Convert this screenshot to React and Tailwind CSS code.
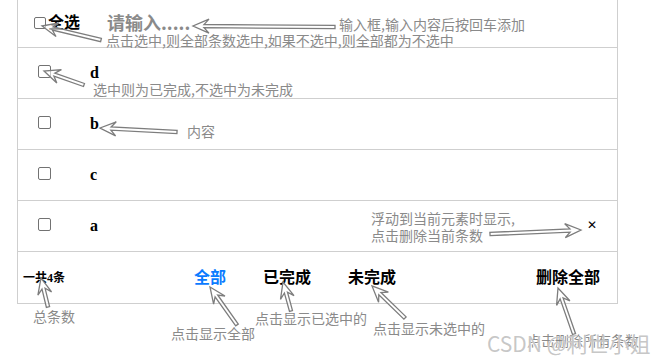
const serif = { fontFamily: '"Liberation Serif", "Noto Sans CJK SC", serif' }

function arrow(x1, y1, x2, y2) {
  // tail (x1,y1) -> tip (x2,y2), hollow arrow
  const dx = x2 - x1
  const dy = y2 - y1
  const len = Math.hypot(dx, dy)
  const ux = dx / len
  const uy = dy / len
  const nx = -uy
  const ny = ux
  const sw = 1.6
  const hl = 16
  const hw = 7
  const bx = x2 - ux * hl
  const by = y2 - uy * hl
  const nb = x2 - ux * (hl - 5)
  const nby = y2 - uy * (hl - 5)
  const pts = [
    [x1 + nx * sw, y1 + ny * sw],
    [nb + nx * sw, nby + ny * sw],
    [bx + nx * hw, by + ny * hw],
    [x2, y2],
    [bx - nx * hw, by - ny * hw],
    [nb - nx * sw, nby - ny * sw],
    [x1 - nx * sw, y1 - ny * sw],
  ]
  return pts.map((p) => p[0].toFixed(1) + ',' + p[1].toFixed(1)).join(' ')
}

const arrows = [
  [335, 27, 193, 26],
  [101, 40, 42, 26],
  [84, 85, 44, 71],
  [177, 132, 100, 128],
  [490, 234, 581, 230],
  [48, 307, 41, 278],
  [237, 325, 210, 287],
  [291, 311, 283, 282],
  [405, 318, 372, 286],
  [574, 334, 558, 288],
]

const notes = [
  { t: '输入框,输入内容后按回车添加', x: 339, y: 15 },
  { t: '点击选中,则全部条数选中,如果不选中,则全部都为不选中', x: 106, y: 31 },
  { t: '选中则为已完成,不选中为未完成', x: 93, y: 80 },
  { t: '内容', x: 187, y: 122 },
  { t: '浮动到当前元素时显示,', x: 371, y: 209 },
  { t: '点击删除当前条数', x: 371, y: 226 },
  { t: '总条数', x: 33, y: 307 },
  { t: '点击显示全部', x: 171, y: 324 },
  { t: '点击显示已选中的', x: 255, y: 309 },
  { t: '点击显示未选中的', x: 373, y: 319 },
  { t: '点击删除所有条数', x: 527, y: 331 },
]

function Box() {
  return <span className="inline-block w-[13px] h-[13px] border border-[#727272] rounded-[2px] bg-white shrink-0" />
}

function Row({ text, del }) {
  return (
    <div className="h-[51px] border-b border-[#cfcfcf] flex items-center pl-[20px] pr-[20px]">
      <span className="-mt-[3px] flex"><Box /></span>
      <span className="ml-[39px] text-[16px] font-bold text-black" style={serif}>{text}</span>
      {del && <span className="ml-auto -mt-[2px] text-[12px] font-bold text-black leading-none" style={{ fontFamily: '"DejaVu Sans", sans-serif' }}>✕</span>}
    </div>
  )
}

export default function App() {
  return (
    <div className="relative w-[660px] h-[361px] bg-white overflow-hidden">
      <div className="ml-[17px] w-[601px] border-x border-b border-[#cfcfcf]">
        <div className="h-[48px] border-b border-[#cfcfcf] flex items-center pl-[16px]">
          <span className="-mt-[2px] flex"><span className="inline-block w-[12px] h-[12px] border border-[#727272] rounded-[2px]" /></span>
          <span className="ml-[2px] -mt-[1px] text-[16px] font-bold text-black" style={serif}>全选</span>
          <span className="ml-[27px] -mt-[2px] text-[18px] font-bold text-[#8a8a8a]" style={{ fontFamily: '"Noto Sans CJK SC", sans-serif' }}>请输入.....</span>
        </div>
        <Row text="d" />
        <Row text="b" />
        <Row text="c" />
        <Row text="a" del />
        <div className="h-[51px] flex items-center pl-[5px] pr-[17px] font-bold" style={serif}>
          <span className="text-[12px] text-black">一共4条</span>
          <span className="ml-[129px] text-[16px] text-[#0b7bff]">全部</span>
          <span className="ml-[37px] text-[16px] text-black">已完成</span>
          <span className="ml-[37px] text-[16px] text-black">未完成</span>
          <span className="ml-auto text-[16px] text-black">删除全部</span>
        </div>
      </div>

      <svg className="absolute inset-0 pointer-events-none" width="660" height="361">
        {arrows.map((a, i) => (
          <polygon key={i} points={arrow(...a)} fill="#fff" fillOpacity="0.6" stroke="#7d7d7d" strokeWidth="1.3" strokeLinejoin="miter" />
        ))}
      </svg>

      {notes.map((n, i) => (
        <span
          key={i}
          className="absolute text-[14px] leading-[18px] text-[#8a8a8a] whitespace-nowrap"
          style={{ left: n.x, top: n.y, fontFamily: '"Noto Sans CJK SC", sans-serif' }}
        >
          {n.t}
        </span>
      ))}

      <span
        className="absolute left-[487px] top-[330px] text-[21px] leading-[26px] text-[#b8b8b8]/80 whitespace-nowrap"
        style={{ fontFamily: '"Noto Sans CJK SC", sans-serif', textShadow: '0 0 1px #fff' }}
      >
        CSDN @利世小姐
      </span>
    </div>
  )
}
